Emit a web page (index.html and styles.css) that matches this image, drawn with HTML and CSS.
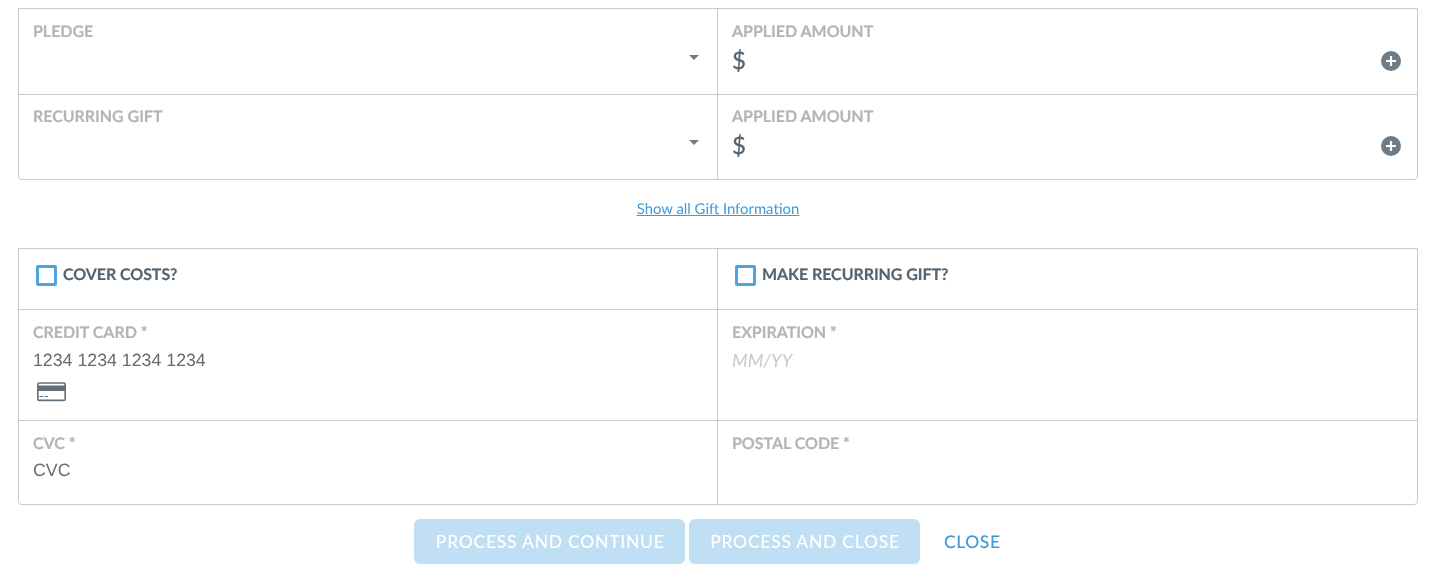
FILE: index.html
```html
<!DOCTYPE html>
<html lang="en">
<head>
<meta charset="utf-8">
<title>Process Gift</title>
<link rel="stylesheet" href="styles.css">
</head>
<body>
<main class="page">
  <section class="panel">
    <div class="cell cell-gift">
      <div class="label">PLEDGE</div>
      <div class="value-row"><span></span><span class="caret"></span></div>
    </div>
    <div class="cell cell-gift cell-right">
      <div class="label">APPLIED AMOUNT</div>
      <div class="value-row"><span class="dollar">$</span>
        <svg class="plus" viewBox="0 0 20 20" aria-hidden="true"><circle cx="10" cy="10" r="10" fill="#6f7c85"/><path d="M10 5v10M5 10h10" stroke="#fff" stroke-width="2.2"/></svg>
      </div>
    </div>
    <div class="cell cell-gift cell-last">
      <div class="label">RECURRING GIFT</div>
      <div class="value-row"><span></span><span class="caret"></span></div>
    </div>
    <div class="cell cell-gift cell-right cell-last">
      <div class="label">APPLIED AMOUNT</div>
      <div class="value-row"><span class="dollar">$</span>
        <svg class="plus" viewBox="0 0 20 20" aria-hidden="true"><circle cx="10" cy="10" r="10" fill="#6f7c85"/><path d="M10 5v10M5 10h10" stroke="#fff" stroke-width="2.2"/></svg>
      </div>
    </div>
  </section>

  <div class="show-all"><a href="#">Show all Gift Information</a></div>

  <section class="panel">
    <div class="cell cell-check">
      <label class="check"><span class="box"></span>COVER COSTS?</label>
    </div>
    <div class="cell cell-check cell-right">
      <label class="check"><span class="box"></span>MAKE RECURRING GIFT?</label>
    </div>
    <div class="cell cell-card">
      <div class="label">CREDIT CARD *</div>
      <div class="stripe">1234 1234 1234 1234</div>
      <svg class="card" viewBox="0 0 29 20" aria-hidden="true">
        <rect x="0.8" y="1" width="27.4" height="17.4" rx="1.5" fill="none" stroke="#5f6f7b" stroke-width="1.6"/>
        <rect x="1" y="3.5" width="27" height="5.5" fill="#5f6f7b"/>
        <path d="M2.5 14.5h3.5M7.5 14.5h3.5" stroke="#5f6f7b" stroke-width="1.2"/>
      </svg>
    </div>
    <div class="cell cell-card cell-right">
      <div class="label">EXPIRATION *</div>
      <div class="placeholder">MM/YY</div>
    </div>
    <div class="cell cell-cvc cell-last">
      <div class="label">CVC *</div>
      <div class="stripe">CVC</div>
    </div>
    <div class="cell cell-cvc cell-right cell-last">
      <div class="label">POSTAL CODE *</div>
    </div>
  </section>

  <div class="actions">
    <button class="btn" type="button">PROCESS AND CONTINUE</button>
    <button class="btn" type="button">PROCESS AND CLOSE</button>
    <a class="close" href="#">CLOSE</a>
  </div>
</main>
</body>
</html>
```
FILE: styles.css
```css
* { box-sizing: border-box; }
html, body { margin: 0; padding: 0; background: #fff; }
body { font-family: Lato, "Liberation Sans", sans-serif; overflow: hidden; }
.page { padding: 8px 16px 0 18px; width: 1434px; will-change: transform; text-rendering: geometricPrecision; }
.panel {
  display: grid;
  grid-template-columns: 698px 700px;
  border: 1px solid #c9c9c9;
  border-radius: 0 0 4px 4px;
  width: 1400px;
}
.cell { border-bottom: 1px solid #c9c9c9; padding: 13px 14px 0; min-width: 0; }
.cell-right { border-left: 1px solid #c9c9c9; }
.cell-last { border-bottom: 0; }
.cell-gift { height: 86px; }
.cell-gift.cell-last { height: 84px; padding-top: 12px; }
.label {
  font-size: 16px;
  line-height: 20px;
  font-weight: 700;
  color: #b5b5b5;
  letter-spacing: -0.03px;
  -webkit-text-stroke: 0.2px #b5b5b5;
}
.value-row {
  display: flex;
  justify-content: space-between;
  align-items: center;
  height: 24px;
  margin-top: 7px;
  padding-right: 2px;
}
.dollar { font-size: 24px; line-height: 24px; color: #56626c; -webkit-text-stroke: 0.3px #56626c; }
.caret {
  align-self: flex-start;
  width: 0;
  height: 0;
  margin-top: 6px;
  margin-right: 2px;
  border-left: 5.5px solid transparent;
  border-right: 5.5px solid transparent;
  border-top: 5.5px solid #6f7c85;
}
.plus { width: 20px; height: 20px; display: block; margin-right: -2px; margin-left: auto; position: relative; left: -2px; }
.show-all { text-align: center; height: 68px; padding-top: 20px; font-size: 14.85px; line-height: 18px; }
.show-all a { color: #3f9ad8; text-decoration: underline; }
.cell-check { height: 61px; padding: 16px 17px 0; }
.check {
  display: flex;
  align-items: flex-start;
  gap: 6px;
  font-size: 16px;
  line-height: 20px;
  font-weight: 700;
  color: #56646f;
  letter-spacing: -0.06px;
  -webkit-text-stroke: 0.2px #56646f;
}
.box {
  width: 21px;
  height: 21px;
  border: 3px solid #4ea3e0;
  border-radius: 2px;
  flex: none;
}
.cell-card { height: 111px; }
.cell-cvc { height: 83px; }
.stripe {
  font-family: "Liberation Sans", Arial, sans-serif;
  font-size: 17.75px;
  line-height: 22px;
  color: #6a6a6a;
  margin-top: 6px;
}
.cell-cvc .stripe { margin-top: 5px; }
.placeholder {
  font-size: 18.2px;
  line-height: 22px;
  font-style: italic;
  color: #c9c9c9;
  margin-top: 6px;
}
.card { display: block; width: 29px; height: 20px; margin: 11px 0 0 4px; }
.actions {
  display: flex;
  justify-content: center;
  align-items: center;
  gap: 4px;
  margin-top: 14px;
}
.btn {
  height: 45px;
  padding: 0 20px 0 21.5px;
  border: 0;
  border-radius: 6px;
  background: #c0def4;
  color: #fff;
  font-family: Lato, sans-serif;
  font-size: 17.5px;
  font-weight: 500;
  letter-spacing: 0.75px;
}
.close {
  margin-left: 20px;
  padding-right: 21px;
  color: #3f9ad8;
  font-size: 17.5px;
  font-weight: 500;
  letter-spacing: 0.6px;
  text-decoration: none;
}
```
